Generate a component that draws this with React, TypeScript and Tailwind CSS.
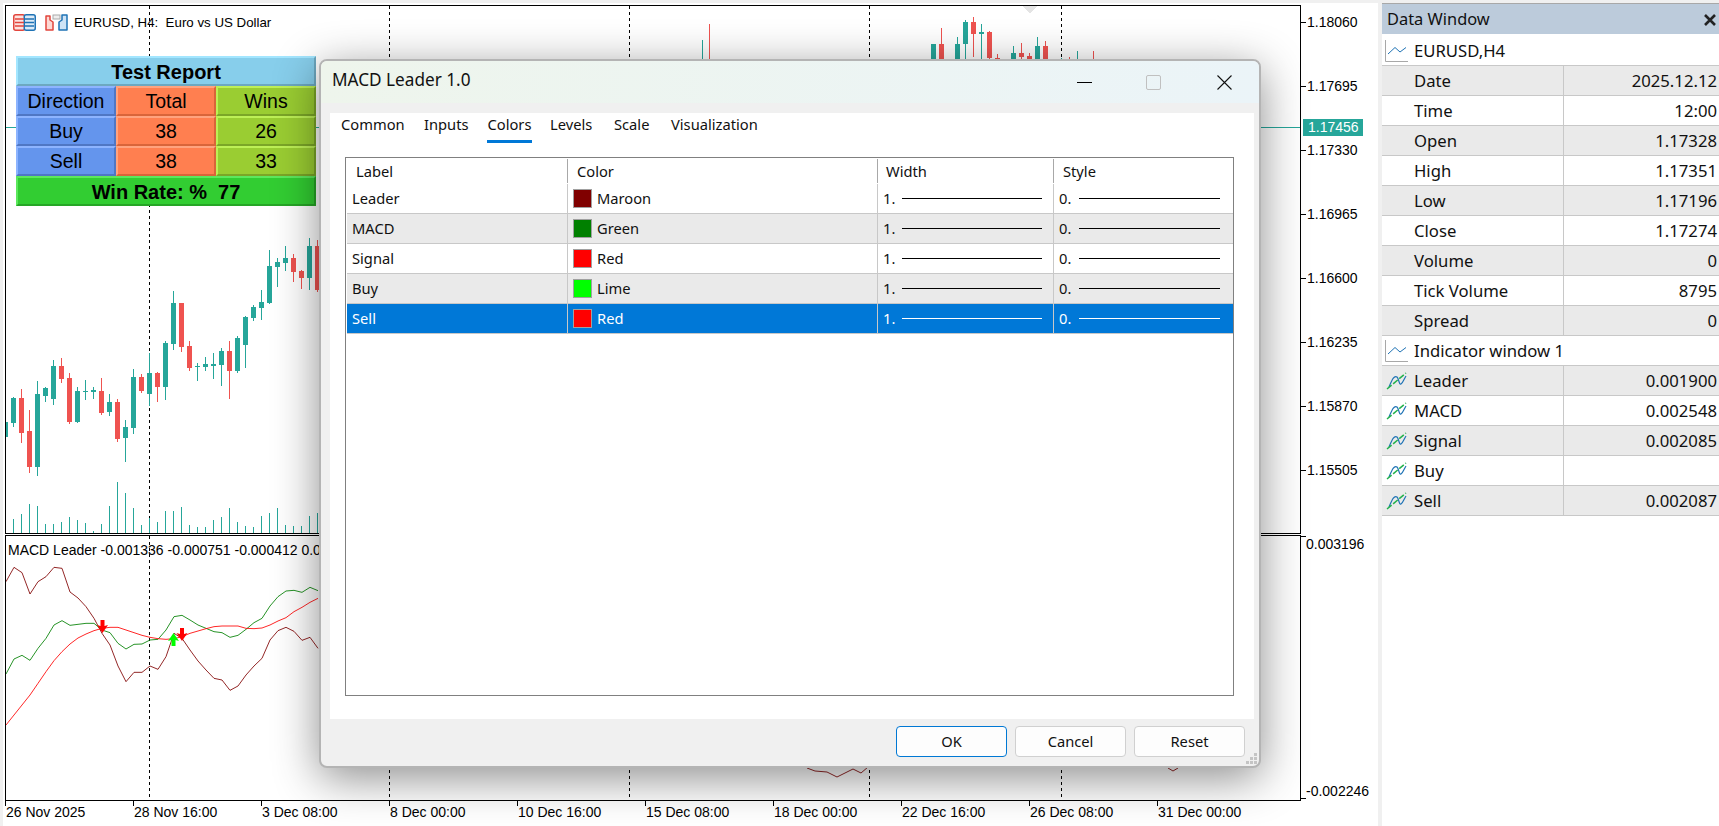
// MT5 chart with the indicator properties dialog on top
const TEAL = '#26a69a';
const RED = '#ef5350';

type Candle = [number, number, number, number, number, number];

// dir (1 teal, 0 red), z-x, high, body top, body bottom, low, read off at 3x (y from 270)
const leftCandles: Candle[] = [
  [1, 40, 380, 384, 458, 470], [0, 64, 357, 384, 488, 518], [0, 88, 420, 483, 590, 608],
  [1, 112, 333, 372, 590, 617], [1, 136, 351, 354, 378, 396], [1, 160, 270, 288, 386, 404],
  [0, 184, 264, 288, 326, 339], [0, 208, 309, 324, 456, 462], [1, 232, 351, 363, 456, 459],
  [1, 256, 330, 363, 366, 389], [1, 280, 351, 360, 365, 386], [0, 304, 324, 363, 429, 435],
  [1, 328, 372, 396, 426, 438], [0, 352, 387, 396, 506, 516], [1, 376, 450, 471, 503, 575],
  [1, 400, 297, 321, 473, 491], [0, 424, 312, 321, 362, 369], [1, 448, 250, 309, 371, 408],
  [0, 472, 306, 309, 350, 396], [1, 496, 213, 219, 350, 390], [1, 520, 63, 99, 221, 240],
  [0, 544, 99, 99, 230, 245], [0, 568, 213, 228, 293, 303], [1, 592, 279, 287, 290, 333],
  [1, 616, 261, 282, 291, 303], [1, 640, 249, 282, 288, 327], [1, 664, 234, 243, 285, 347],
  [0, 688, 213, 243, 302, 386], [1, 712, 198, 204, 302, 309], [1, 736, 138, 141, 225, 294],
  [1, 760, 105, 111, 144, 153], [1, 784, 60, 96, 114, 150], [1, 808, -60, -12, 99, 102],
  [1, 832, -36, -24, -9, 52], [1, 856, -72, -36, -21, 3], [0, 880, -48, -36, 6, 36],
  [0, 904, 0, 3, 24, 57], [1, 928, -96, -72, 24, 60], [0, 952, -90, -72, 60, 66],
];

// same fields in real page pixels, for the candles above the dialog
const topCandles: Candle[] = [
  [1, 702, 40, 60, 60, 60], [0, 709, 24, 60, 60, 60], [1, 933, 44, 44, 60, 60],
  [0, 941, 28, 44, 60, 60], [1, 957, 37, 44, 60, 60], [1, 965, 20, 22, 44, 60],
  [0, 973, 17, 22, 34, 57], [1, 981, 24, 32, 34, 60], [0, 989, 31, 32, 58, 60],
  [0, 997, 54, 58, 60, 60], [1, 1013, 46, 53, 60, 60], [0, 1021, 43, 53, 57, 60],
  [0, 1029, 53, 56, 60, 60], [1, 1037, 37, 46, 60, 60], [0, 1045, 41, 46, 60, 60],
  [1, 1061, 58, 59, 60, 60], [0, 1069, 57, 59, 60, 60], [1, 1077, 51, 60, 60, 60],
  [0, 1093, 51, 60, 60, 60],
];

const volumes = [747, 732, 702, 708, 762, 762, 756, 741, 750, 759, 784, 762, 708, 636, 669, 714, 765, 744, 756, 723, 723, 711, 765, 771, 771, 750, 741, 714, 756, 768, 771, 738, 729, 714, 765, 768, 768, 738, 729];

const maroon = [155, 112, 128, 192, 155, 140, 112, 115, 186, 204, 230, 265, 310, 345, 408, 455, 427, 427, 408, 418, 380, 310, 325, 360, 393, 420, 445, 450, 481, 468, 435, 408, 385, 330, 302, 292, 304, 331, 322, 355];
const green = [432, 387, 376, 391, 355, 325, 285, 272, 286, 283, 280, 280, 300, 308, 340, 357, 343, 342, 330, 328, 300, 260, 256, 270, 285, 295, 305, 308, 322, 316, 298, 278, 265, 228, 200, 183, 181, 187, 172, 182];
const signal = [585, 555, 525, 495, 460, 425, 392, 365, 342, 324, 312, 302, 295, 292, 292, 300, 308, 316, 322, 326, 328, 326, 320, 310, 303, 296, 290, 288, 288, 288, 295, 296, 294, 285, 273, 263, 245, 232, 217, 205];

const toLine = (ys: number[]) => ys.map((y, i) => `${6 + i * 8},${530 + y / 3}`).join(' ');

const dashX = [149, 389, 629, 869, 1061];
const prices = ['1.18060', '1.17695', '1.17330', '1.16965', '1.16600', '1.16235', '1.15870', '1.15505'];
const times = ['26 Nov 2025', '28 Nov 16:00', '3 Dec 08:00', '8 Dec 00:00', '10 Dec 16:00', '15 Dec 08:00', '18 Dec 00:00', '22 Dec 16:00', '26 Dec 08:00', '31 Dec 00:00'];

function CandleMark({ c, xc, y }: { c: Candle; xc: number; y: (v: number) => number }) {
  const color = c[0] ? TEAL : RED;
  return (
    <g fill={color}>
      <rect x={xc} y={y(c[2])} width={1} height={Math.max(0, y(c[5]) - y(c[2]))} />
      <rect x={xc - 2} y={y(c[3])} width={5} height={Math.max(1, y(c[4]) - y(c[3]))} />
    </g>
  );
}

function MainChart() {
  return (
    <svg width={1294} height={527} viewBox="6 6 1294 527" className="block" shapeRendering="crispEdges">
      <line x1={6} x2={1300} y1={127.5} y2={127.5} stroke={TEAL} />
      {dashX.map(x => (
        <line key={x} x1={x + 0.5} x2={x + 0.5} y1={6} y2={533} stroke="#000" strokeDasharray="3 3" />
      ))}
      <rect x={6} y={422} width={2} height={15} fill={TEAL} />
      {leftCandles.map(c => (
        <CandleMark key={c[1]} c={c} xc={Math.floor(c[1] / 3)} y={v => Math.round(270 + v / 3)} />
      ))}
      {topCandles.map(c => (
        <CandleMark key={c[1]} c={c} xc={c[1]} y={v => v} />
      ))}
      {volumes.map((v, i) => (
        <rect key={i} x={13 + i * 8} y={Math.round(270 + v / 3)} width={1} height={533 - Math.round(270 + v / 3)} fill={TEAL} />
      ))}
      <polygon points="1023,6 1037,6 1030,14" fill="#e4e4e4" />
    </svg>
  );
}

function IndicatorChart() {
  const down = (x: number, y: number) =>
    `${x - 2},${y} ${x + 2},${y} ${x + 2},${y + 6} ${x + 5.5},${y + 5} ${x},${y + 13} ${x - 5.5},${y + 5} ${x - 2},${y + 6}`;
  const up = (x: number, y: number) =>
    `${x - 2},${y + 13} ${x + 2},${y + 13} ${x + 2},${y + 7} ${x + 5.5},${y + 8} ${x},${y} ${x - 5.5},${y + 8} ${x - 2},${y + 7}`;
  return (
    <svg width={1294} height={264} viewBox="6 536 1294 264" className="block">
      {dashX.map(x => (
        <line key={x} x1={x + 0.5} x2={x + 0.5} y1={536} y2={800} stroke="#000" strokeDasharray="3 3" shapeRendering="crispEdges" />
      ))}
      <g fill="none" strokeWidth={0.85}>
        <polyline points={toLine(maroon)} stroke="#800000" />
        <polyline points={toLine(green)} stroke="#008000" />
        <polyline points={toLine(signal)} stroke="#ff0000" />
        <polyline points="807,768 815,771 827,772 837,777 853,769 861,773 868,767" stroke="#800000" />
        <polyline points="1168,768 1173,771 1178,768" stroke="#800000" />
      </g>
      <polygon points={down(102.5, 620)} fill="#ff0000" />
      <polygon points={up(173.5, 633)} fill="#00ff00" />
      <polygon points={down(182, 628)} fill="#ff0000" />
    </svg>
  );
}

function TableIcon() {
  return (
    <svg width={23} height={17} viewBox="0 0 23 17">
      <rect x={0.75} y={0.75} width={11} height={15.5} rx={2} fill="#fde3e0" stroke="#e2463d" strokeWidth={1.5} />
      <rect x={11.25} y={0.75} width={11} height={15.5} rx={2} fill="#dcebf7" stroke="#1f73b5" strokeWidth={1.5} />
      <path d="M2 5h9M2 8.5h9M2 12h9" stroke="#e2463d" strokeWidth={1.3} />
      <path d="M12 5h9M12 8.5h9M12 12h9" stroke="#1f73b5" strokeWidth={1.3} />
    </svg>
  );
}

function LayoutIcon() {
  return (
    <svg width={23} height={17} viewBox="0 0 23 17">
      <path d="M1 2h4v4l3 2v8H1z" fill="#fdd9d4" stroke="#e2463d" strokeWidth={1.5} strokeLinejoin="round" />
      <path d="M22 1v15h-8V8l3-2V1z" fill="#cfe4f6" stroke="#1f73b5" strokeWidth={1.5} strokeLinejoin="round" />
      <rect x={8} y={1} width={7} height={4} fill="#eee" stroke="#aaa" />
    </svg>
  );
}

function WindowIcon() {
  return (
    <svg width={24} height={24} viewBox="0 0 24 24">
      <path d="M1.5 1v21.5H24" fill="none" stroke="#a8a8a8" />
      <polyline points="4,15 11,8.5 16,13 22,8.5" fill="none" stroke="#1f73b5" />
    </svg>
  );
}

function LineIcon() {
  return (
    <svg width={21} height={18} viewBox="0 0 21 18">
      <path d="M3 15C6 8 8 3 11 5c2 2 2 8 4 7 2-1 3-5 5-8" fill="none" stroke="#1f73b5" strokeWidth={1.2} />
      <path d="M1 17 20 1" fill="none" stroke="#22b14c" strokeWidth={1.5} strokeDasharray="6 2" />
    </svg>
  );
}

const cellBlue = 'bg-[#6495ed] border-t-[#8db4ff] border-l-[#8db4ff] border-b-[#4f77c4] border-r-[#4f77c4]';
const cellCoral = 'bg-[#ff7f50] border-t-[#ffa37f] border-l-[#ffa37f] border-b-[#d9653a] border-r-[#d9653a]';
const cellLime = 'bg-[#9acd32] border-t-[#bdf056] border-l-[#bdf056] border-b-[#7ba627] border-r-[#7ba627]';

function ReportCell({ text, tone }: { text: string; tone: string }) {
  return <div className={`flex h-[30px] w-[100px] items-center justify-center border-2 pt-px text-[19.5px] ${tone}`}>{text}</div>;
}

function ReportPanel() {
  const rows = [
    ['Direction', 'Total', 'Wins'],
    ['Buy', '38', '26'],
    ['Sell', '38', '33'],
  ];
  return (
    <div className="absolute left-[10px] top-[50px] w-[300px] text-black">
      <div className="flex h-[30px] items-center justify-center border-2 border-t-[#a3e6ff] border-l-[#a3e6ff] border-b-[#6da8c0] border-r-[#6da8c0] bg-[#87ceeb] pt-px text-[20px] font-bold">
        Test Report
      </div>
      {rows.map(r => (
        <div key={r[0]} className="flex">
          <ReportCell text={r[0]} tone={cellBlue} />
          <ReportCell text={r[1]} tone={cellCoral} />
          <ReportCell text={r[2]} tone={cellLime} />
        </div>
      ))}
      <div className="flex h-[30px] items-center justify-center whitespace-pre border-2 border-t-[#5ce85c] border-l-[#5ce85c] border-b-[#26a626] border-r-[#26a626] bg-[#32cd32] pt-px text-[20px] font-bold">
        {'Win Rate: %  77'}
      </div>
    </div>
  );
}

const dataRows: [string, string][] = [
  ['Date', '2025.12.12'], ['Time', '12:00'], ['Open', '1.17328'], ['High', '1.17351'], ['Low', '1.17196'],
  ['Close', '1.17274'], ['Volume', '0'], ['Tick Volume', '8795'], ['Spread', '0'],
];
const indicatorRows: [string, string][] = [
  ['Leader', '0.001900'], ['MACD', '0.002548'], ['Signal', '0.002085'], ['Buy', ''], ['Sell', '0.002087'],
];

function DataRow({ label, value, shaded, icon }: { label: string; value: string; shaded: boolean; icon?: boolean }) {
  return (
    <div className={`flex h-[30px] border-b border-[#c8c8c8] ${shaded ? 'bg-[#eaeaea]' : 'bg-white'}`}>
      <div className="flex w-[32px] items-center pl-[4px]">{icon && <LineIcon />}</div>
      <div className="flex w-[150px] items-center border-r border-[#c8c8c8] pt-px">{label}</div>
      <div className="flex flex-1 items-center justify-end pr-[2px] pt-px">{value}</div>
    </div>
  );
}

function DataWindow() {
  return (
    <div className="h-full w-[337px] bg-white font-['Noto_Sans',sans-serif] text-[16.7px] text-[#111]">
      <div className="mt-[3px] flex h-[31px] items-center justify-between border-t border-[#a8a8a8] bg-[#bccbdb] pl-[5px] pr-[2px] pt-px text-[16.4px]">
        <span>Data Window</span>
        <svg width={14} height={14} viewBox="0 0 14 14">
          <path d="M2 2l10 10M12 2 2 12" stroke="#222" strokeWidth={2.6} />
        </svg>
      </div>
      <div className="mt-[2px] flex h-[30px] items-center border-b border-[#c8c8c8] pt-px">
        <div className="w-[32px] pl-[2px]"><WindowIcon /></div>
        EURUSD,H4
      </div>
      {dataRows.map((r, i) => (
        <DataRow key={r[0]} label={r[0]} value={r[1]} shaded={i % 2 === 0} />
      ))}
      <div className="flex h-[30px] items-center border-b border-[#c8c8c8] pt-px">
        <div className="w-[32px] pl-[2px]"><WindowIcon /></div>
        Indicator window 1
      </div>
      {indicatorRows.map((r, i) => (
        <DataRow key={r[0]} label={r[0]} value={r[1]} shaded={i % 2 === 0} icon />
      ))}
    </div>
  );
}

function PropRow({ label, swatch, color, shaded, selected }: { label: string; swatch: string; color: string; shaded: boolean; selected?: boolean }) {
  const line = selected ? 'bg-white' : 'bg-black';
  const tone = selected ? 'bg-[#0078d7] text-white' : shaded ? 'bg-[#eaeaea]' : 'bg-white';
  return (
    <div className={`flex h-[30px] border-b border-[#c8c8c8] ${tone}`}>
      <div className="flex w-[221px] items-center border-r border-[#c8c8c8] pl-[5px]">{label}</div>
      <div className="flex w-[310px] items-center border-r border-[#c8c8c8] pl-[5px]">
        <span className={`h-[19px] w-[19px] border border-[#a0a0a0] ${swatch}`} />
        <span className="ml-[5px]">{color}</span>
      </div>
      <div className="flex w-[176px] items-center border-r border-[#c8c8c8] pl-[5px]">
        <span className="w-[19px]">1.</span>
        <span className={`h-px w-[140px] ${line}`} />
      </div>
      <div className="flex flex-1 items-center pl-[5px]">
        <span className="w-[20px]">0.</span>
        <span className={`h-px w-[141px] ${line}`} />
      </div>
    </div>
  );
}

function PropsDialog() {
  return (
    <div className="absolute left-[319px] top-[59px] flex h-[709px] w-[942px] flex-col rounded-[8px] border-2 border-[#b4b4b4] bg-[#f0f0f0] font-['Noto_Sans',sans-serif] text-[14.7px] text-[#111] shadow-[0_10px_45px_rgba(0,0,0,0.45)]">
      <div className="flex h-[42px] items-center justify-between rounded-t-[6px] bg-gradient-to-r from-[#eef5ec] to-[#ebf4f8] pb-[4px] pl-[11px] pr-[27px] text-[17.2px]">
        <span>MACD Leader 1.0</span>
        <div className="flex items-center pt-[4px]">
          <span className="h-px w-[15px] bg-black" />
          <span className="ml-[54px] h-[15px] w-[15px] rounded-[2px] border border-[#c0c0c0]" />
          <svg className="ml-[56px]" width={15} height={15} viewBox="0 0 15 15">
            <path d="M0.5 0.5l14 14M14.5 0.5l-14 14" stroke="#111" strokeWidth={1.1} />
          </svg>
        </div>
      </div>
      <div className="ml-[9px] mr-[5px] mt-[10px] flex h-[606px] flex-col bg-white pb-[23px] pl-[15px] pr-[20px]">
        <div className="-ml-[4px] flex h-[30px] items-start leading-[22px]">
          <span className="w-[83px]">Common</span>
          <span className="w-[63px]">Inputs</span>
          <span className="mr-[18px] flex h-[30px] w-[45px] items-start justify-center border-b-[3px] border-[#0078d7]">Colors</span>
          <span className="w-[64px]">Levels</span>
          <span className="w-[57px]">Scale</span>
          <span>Visualization</span>
        </div>
        <div className="mt-[14px] flex-1 border border-[#808080] pl-px">
          <div className="flex h-[26px]">
            <div className="my-[1px] flex w-[221px] items-center border-r border-[#a8a8a8] pl-[9px]">Label</div>
            <div className="my-[1px] flex w-[310px] items-center border-r border-[#a8a8a8] pl-[9px]">Color</div>
            <div className="my-[1px] flex w-[176px] items-center border-r border-[#a8a8a8] pl-[8px]">Width</div>
            <div className="my-[1px] flex flex-1 items-center pl-[9px]">Style</div>
          </div>
          <PropRow label="Leader" swatch="bg-[#800000]" color="Maroon" shaded={false} />
          <PropRow label="MACD" swatch="bg-[#008000]" color="Green" shaded />
          <PropRow label="Signal" swatch="bg-[#ff0000]" color="Red" shaded={false} />
          <PropRow label="Buy" swatch="bg-[#00ff00]" color="Lime" shaded />
          <PropRow label="Sell" swatch="bg-[#ff0000]" color="Red" shaded={false} selected />
        </div>
      </div>
      <div className="mr-[14px] mt-[7px] flex justify-end gap-[8px]">
        <button className="h-[31px] w-[111px] rounded-[4px] border border-[#0078d4] bg-[#fdfdfd]">OK</button>
        <button className="h-[31px] w-[111px] rounded-[4px] border border-[#d0d0d0] bg-[#fdfdfd]">Cancel</button>
        <button className="h-[31px] w-[111px] rounded-[4px] border border-[#d0d0d0] bg-[#fdfdfd]">Reset</button>
      </div>
      <svg className="absolute bottom-[1px] right-[1px]" width={12} height={12} viewBox="0 0 12 12" fill="#c4c4c4">
        <rect x={8} y={0} width={3} height={3} />
        <rect x={4} y={4} width={3} height={3} />
        <rect x={8} y={4} width={3} height={3} />
        <rect x={0} y={8} width={3} height={3} />
        <rect x={4} y={8} width={3} height={3} />
        <rect x={8} y={8} width={3} height={3} />
      </svg>
    </div>
  );
}

export default function App() {
  return (
    <div className="relative flex h-[826px] w-[1719px] overflow-hidden bg-[#f0f0f0] pl-[3px] pt-[3px] font-['Liberation_Sans',Arial,sans-serif] text-[14px] text-black">
      <div className="flex w-[1375px] flex-col bg-white pl-[2px] pt-[2px]">
        {/* price pane */}
        <div className="flex h-[529px]">
          <div className="relative w-[1296px] border border-black">
            <MainChart />
            <div className="absolute left-[7px] top-[7px] flex items-center">
              <TableIcon />
              <span className="ml-[9px]"><LayoutIcon /></span>
              <span className="ml-[6px] whitespace-pre text-[13.3px]">{'EURUSD, H4:  Euro vs US Dollar'}</span>
            </div>
            <ReportPanel />
          </div>
          <div className="relative flex-1 pt-[9px]">
            {prices.map(p => (
              <div key={p} className="flex h-[64px]">
                <span className="mt-[8px] h-px w-[5px] bg-black" />
                <span className="ml-[1px] leading-4">{p}</span>
              </div>
            ))}
            <div className="absolute left-[2px] top-[114px] flex h-[17px] w-[60px] items-center bg-[#26a69a] pl-[5px] text-white">1.17456</div>
          </div>
        </div>
        {/* indicator pane */}
        <div className="mt-px flex h-[266px]">
          <div className="relative w-[1296px] border border-black">
            <IndicatorChart />
            <span className="absolute left-[2px] top-[4px] whitespace-nowrap">MACD Leader -0.001336 -0.000751 -0.000412 0.000000 0.000000</span>
          </div>
          <div className="flex flex-1 flex-col justify-between">
            <div className="flex pt-px">
              <span className="h-px w-[5px] bg-black" />
              <span className="leading-4">0.003196</span>
            </div>
            <div className="flex items-end pb-[2px]">
              <span className="h-px w-[5px] bg-black" />
              <span className="leading-4">-0.002246</span>
            </div>
          </div>
        </div>
        {/* time axis */}
        <div className="flex">
          {times.map(t => (
            <div key={t} className="w-[128px] shrink-0">
              <div className="h-[5px] w-px bg-black" />
              <div className="-mt-[2px] pl-px leading-4">{t}</div>
            </div>
          ))}
        </div>
      </div>
      <div className="ml-[4px] -mt-[3px]">
        <DataWindow />
      </div>
      <PropsDialog />
    </div>
  );
}
